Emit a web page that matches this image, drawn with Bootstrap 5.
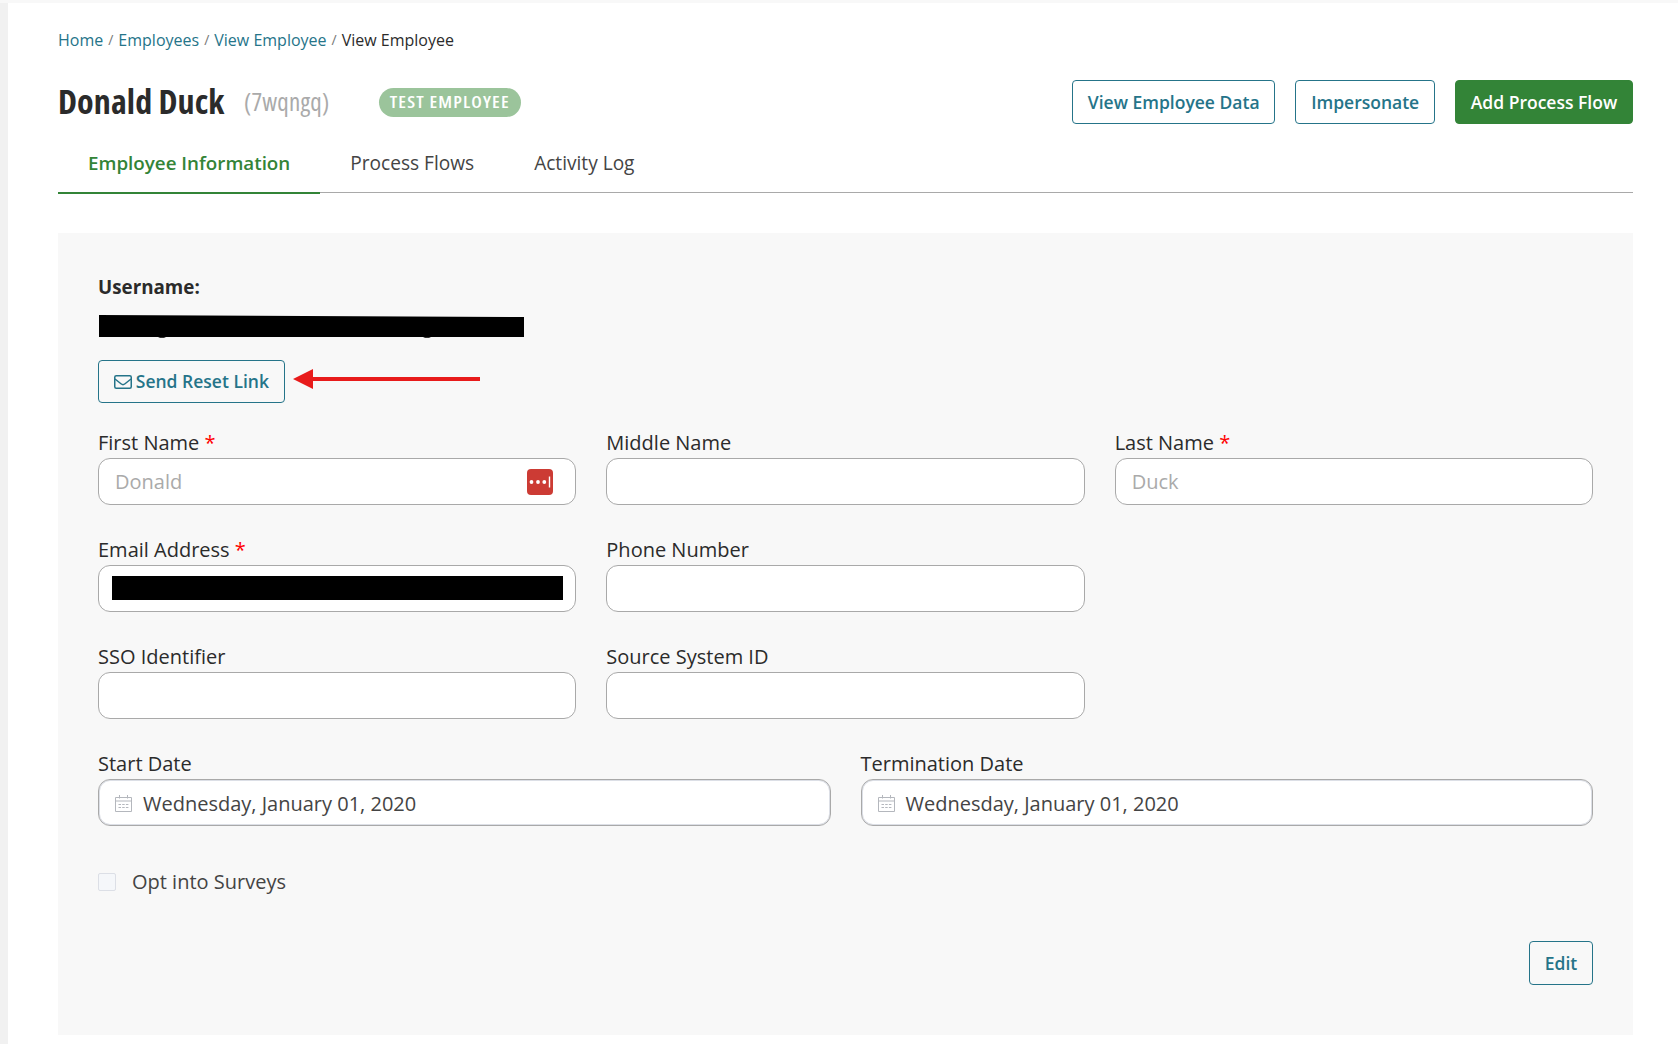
<!DOCTYPE html>
<html lang="en">
<head>
<meta charset="utf-8">
<meta name="viewport" content="width=device-width, initial-scale=1">
<title>View Employee</title>
<link href="https://cdn.jsdelivr.net/npm/bootstrap@5.3.0/dist/css/bootstrap.min.css" rel="stylesheet">
<style>
:root{--teal:#257489;--green:#338437;--line:#a9a9a9}
body{font-family:"Open Sans","Noto Sans",sans-serif;color:#2b2b2b;background:#fff;font-size:20px;overflow:hidden}
.shell{border-left:8px solid #f1f1f1;height:1044px;padding:0 45px 0 50px;position:relative}
.shell::before{content:"";position:absolute;top:0;left:-8px;right:0;height:3px;background:#f8f8f8}
.crumbs{font-size:16px;line-height:24px;padding-top:28px;--bs-breadcrumb-item-padding-x:5px}
.crumbs a{color:var(--teal);text-decoration:none}
.crumbs .breadcrumb-item.active{color:#2b2b2b}
.crumbs .breadcrumb-item+.breadcrumb-item::before{font-size:14px;color:#777}
.titlebar{height:44px;margin-top:28px}
.person{font-stretch:75%;font-weight:700;font-size:34px;line-height:42px;height:44px;width:186px;letter-spacing:.1px;color:#2b2b2b;white-space:nowrap}
.person-id{font-stretch:75%;font-size:25px;line-height:42px;height:44px;width:135px;letter-spacing:.2px;color:#aaa;white-space:nowrap}
.test-pill{font-stretch:75%;font-size:16px;font-weight:600;line-height:29px;height:29px;width:142px;padding:0;letter-spacing:1px;background:#9bc49b;color:#fff}
.test-pill span{display:inline-block;transform:scaleX(1.16)}
.actions{gap:20px}
.act{--bs-btn-color:var(--teal);--bs-btn-border-color:var(--teal);--bs-btn-hover-bg:var(--teal);--bs-btn-hover-color:#fff;--bs-btn-font-weight:600;--bs-btn-font-size:17.5px;--bs-btn-padding-x:14.8px;--bs-btn-padding-y:0;--bs-btn-border-radius:4px;height:44px;line-height:42px;white-space:nowrap}
.act.go{--bs-btn-color:#fff;--bs-btn-bg:var(--green);--bs-btn-border-color:var(--green)}
.tabs{--bs-nav-tabs-border-width:0;border-bottom:1px solid var(--line);height:69px}
.tabs .nav-link{border:0;border-bottom:2px solid transparent;height:70px;margin-bottom:-1px;padding:22px 30px 0;line-height:34px;font-size:19.1px;color:#444;white-space:nowrap}
.tabs .nav-link.active{color:var(--green);border-color:var(--green);font-weight:600;font-size:18.8px;background:none}
.panel{background:#f8f8f8;margin-top:40px;height:802px;padding:40px}
.uname{font-weight:700;font-size:18.8px;line-height:28px;height:42px}
.redact{display:block;background:#000;width:451px;height:24px}
.sendrow{margin-top:22px;height:43px}
.sendrow .act{height:43px;line-height:41px}
.frm{--bs-gutter-x:30px;padding-top:26px}
.frm label.cap{display:block;line-height:27px;height:29px;white-space:nowrap}
.frm .req{color:#f00}
.field{height:47px;border:1px solid var(--line);border-radius:12px;background:#fff;padding:0 16px 1px;font-size:20px;line-height:43px;color:#2b2b2b;margin-bottom:31px}
.field::placeholder{color:#aaa;opacity:1}
.datef{color:#444;box-shadow:inset 0 0 0 1px #dcdfe6;gap:11px;padding-top:2px;padding-bottom:0}
.passkey{right:23px;top:11px}
.optbox{width:18px;height:18px;border:1px solid #dcdfe6;border-radius:2px;background:#f5f7fa}
.optrow{margin-top:10px;height:30px;color:#444;gap:16px}
.editrow{margin-top:44px}
</style>
<script src="https://cdn.jsdelivr.net/npm/bootstrap@5.3.0/dist/js/bootstrap.bundle.min.js"></script>
</head>
<body>
<main class="shell">
  <nav aria-label="breadcrumb">
    <ol class="breadcrumb crumbs m-0">
      <li class="breadcrumb-item"><a href="#">Home</a></li>
      <li class="breadcrumb-item"><a href="#">Employees</a></li>
      <li class="breadcrumb-item"><a href="#">View Employee</a></li>
      <li class="breadcrumb-item active" aria-current="page">View Employee</li>
    </ol>
  </nav>
  <header class="titlebar d-flex align-items-center">
    <h1 class="person m-0">Donald Duck</h1>
    <span class="person-id">(7wqngq)</span>
    <span class="badge rounded-pill test-pill"><span>TEST EMPLOYEE</span></span>
    <div class="d-flex ms-auto actions">
      <button class="btn act">View Employee Data</button>
      <button class="btn act">Impersonate</button>
      <button class="btn act go">Add Process Flow</button>
    </div>
  </header>
  <ul class="nav nav-tabs tabs flex-nowrap">
    <li class="nav-item"><a class="nav-link active" href="#">Employee Information</a></li>
    <li class="nav-item"><a class="nav-link" href="#">Process Flows</a></li>
    <li class="nav-item"><a class="nav-link" href="#">Activity Log</a></li>
  </ul>
  <section class="panel">
    <div class="uname">Username:</div>
    <svg class="d-block" width="427" height="23" viewBox="0 0 427 23"><path d="M1 0L426 2V22H1z"/><path d="M60 22h8l-2 1h-4zM325 22h8l-2 1h-4z" fill="#333"/></svg>
    <div class="sendrow d-flex">
      <button class="btn act d-flex align-items-center"><svg class="me-1" width="18" height="14" viewBox="0 0 18 14" fill="none" stroke="currentColor" stroke-width="1.5"><rect x=".75" y=".75" width="16.5" height="12.5" rx="1.5"/><path d="M1 4l6.3 5q1.7 1.3 3.4 0L17 4"/></svg>Send Reset Link</button>
      <svg class="ms-2" width="188" height="43" viewBox="0 0 188 43" fill="#e81b1b"><path d="M0 19L20 9V17H187V21H20V29z"/></svg>
    </div>
    <form class="row frm">
      <div class="col-4"><label class="cap">First Name <span class="req">*</span></label>
        <div class="position-relative"><input class="form-control field" placeholder="Donald">
          <svg class="position-absolute passkey" width="26" height="26" viewBox="0 0 26 26"><rect width="26" height="26" rx="4" fill="#cc3b34"/><g fill="#fff"><circle cx="4.5" cy="13" r="1.9"/><circle cx="11" cy="13" r="1.9"/><circle cx="17.3" cy="13" r="1.9"/><path d="M21.8 7.5h1.4v11h-1.4z"/></g></svg></div></div>
      <div class="col-4"><label class="cap">Middle Name</label><input class="form-control field"></div>
      <div class="col-4"><label class="cap">Last Name <span class="req">*</span></label><input class="form-control field" placeholder="Duck"></div>
      <div class="col-4"><label class="cap">Email Address <span class="req">*</span></label><div class="field px-0 d-flex align-items-center justify-content-center"><span class="redact"></span></div></div>
      <div class="col-4"><label class="cap">Phone Number</label><input class="form-control field"></div>
      <div class="col-4"></div>
      <div class="col-4"><label class="cap">SSO Identifier</label><input class="form-control field"></div>
      <div class="col-4"><label class="cap">Source System ID</label><input class="form-control field"></div>
      <div class="col-4"></div>
      <div class="col-6"><label class="cap">Start Date</label><div class="field datef d-flex align-items-center">
        <svg width="17" height="18" viewBox="0 0 17 18" fill="none" stroke="#b4b7bd"><path d="M.5 2.5h16v14H.5zM.5 6h16M4.5 0v3.5M12.5 0v3.5"/><path d="M3.5 9.5h10M3.5 12.5h10" stroke-dasharray="2.5 1.2"/></svg><span>Wednesday, January 01, 2020</span></div></div>
      <div class="col-6"><label class="cap">Termination Date</label><div class="field datef d-flex align-items-center">
        <svg width="17" height="18" viewBox="0 0 17 18" fill="none" stroke="#b4b7bd"><path d="M.5 2.5h16v14H.5zM.5 6h16M4.5 0v3.5M12.5 0v3.5"/><path d="M3.5 9.5h10M3.5 12.5h10" stroke-dasharray="2.5 1.2"/></svg><span>Wednesday, January 01, 2020</span></div></div>
    </form>
    <div class="d-flex align-items-center optrow"><span class="optbox"></span><span>Opt into Surveys</span></div>
    <div class="d-flex justify-content-end editrow"><button class="btn act">Edit</button></div>
  </section>
</main>
</body>
</html>
